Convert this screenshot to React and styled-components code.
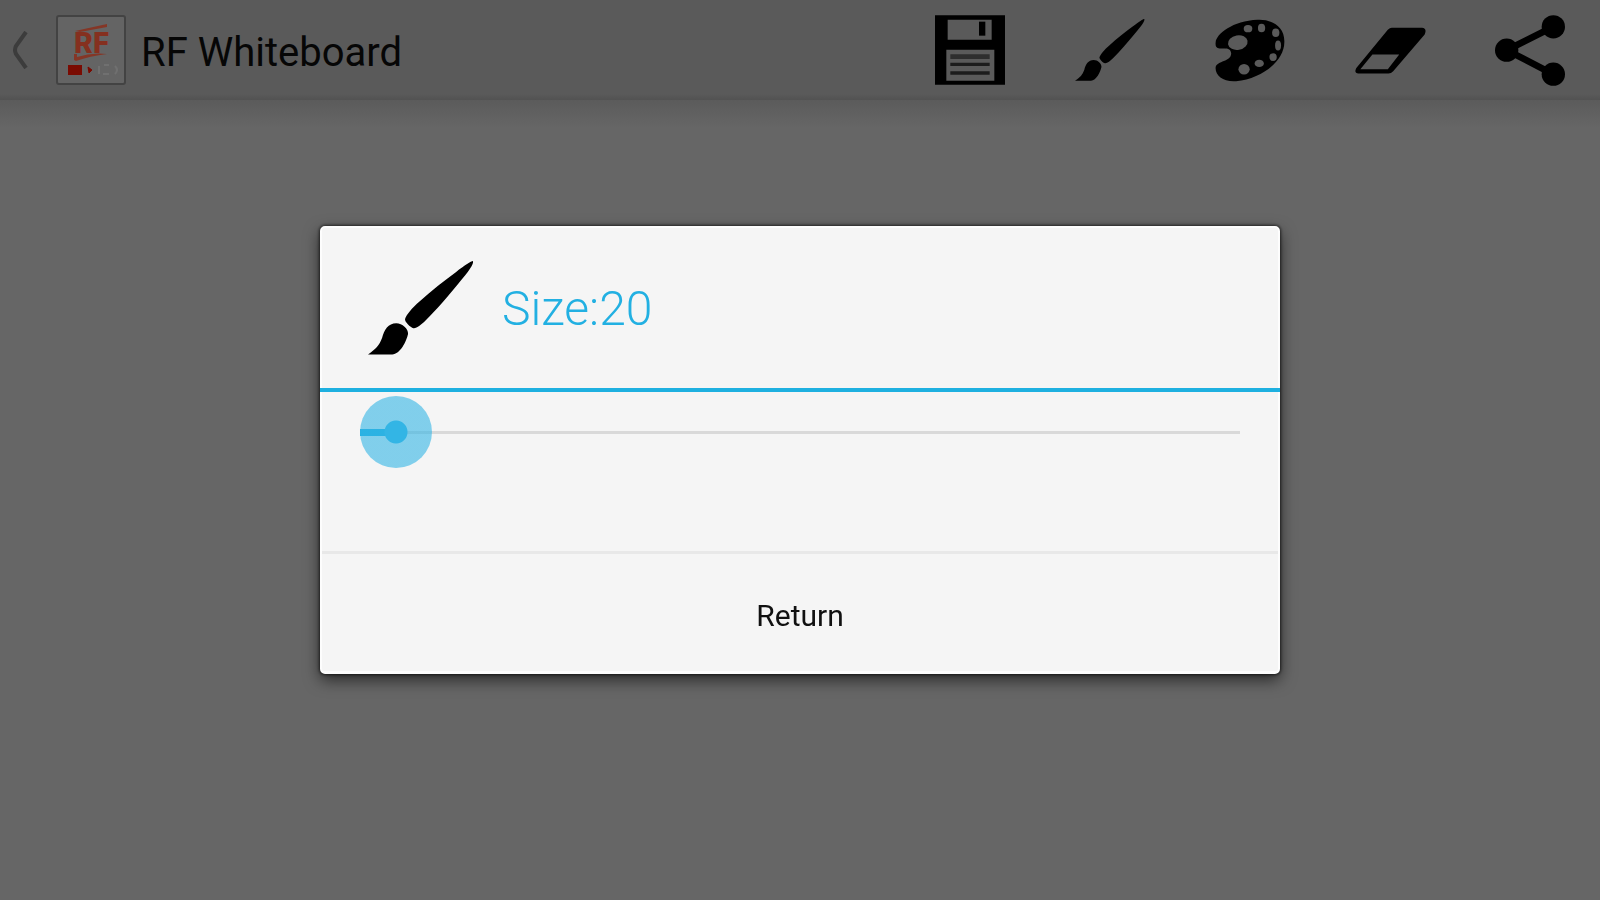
import React, { useState } from "react";
import styled, { createGlobalStyle } from "styled-components";

const GlobalStyle = createGlobalStyle`
  * { box-sizing: border-box; }
  body {
    margin: 0;
    background: #666666;
    font-family: Roboto, "Liberation Sans", sans-serif;
  }
  svg { display: block; }
`;

const Screen = styled.div`
  min-height: 100vh;
  display: flex;
  flex-direction: column;
`;

const ActionBar = styled.header`
  display: flex;
  align-items: center;
  justify-content: space-between;
  height: 100px;
  background: linear-gradient(#5a5a5a 94%, #525252);
`;

const BarShadow = styled.div`
  height: 28px;
  background: linear-gradient(#5b5b5b, #666666);
`;

const UpLink = styled.a`
  display: flex;
  align-items: center;
  padding-left: 12px;
  color: #060606;
  text-decoration: none;
`;

const AppIcon = styled.span`
  margin: 0 15px 0 28px;
`;

const AppTitle = styled.h1`
  margin: 0;
  padding-top: 6px;
  font-size: 40px;
  line-height: 48px;
  font-weight: 400;
`;

const Actions = styled.nav`
  display: flex;
  height: 100%;
`;

const ActionButton = styled.button`
  display: flex;
  align-items: center;
  justify-content: center;
  width: 140px;
  padding: 0;
  border: 0;
  background: none;
  color: #000;
`;

const Overlay = styled.div`
  position: fixed;
  inset: 0;
  display: flex;
  align-items: center;
  justify-content: center;
`;

const Dialog = styled.section`
  width: 60%;
  display: flex;
  flex-direction: column;
  border: 2px solid #fdfdfd;
  border-bottom-width: 3px;
  border-radius: 5px;
  background: #f5f5f5;
  box-shadow: 0 0 3px 1px rgba(0, 0, 0, 0.6), 0 6px 16px rgba(0, 0, 0, 0.6);
`;

const DialogHeader = styled.div`
  display: flex;
  align-items: center;
  gap: 28px;
  height: 164px;
  margin: 0 -2px;
  padding: 0 48px;
  border-bottom: 4px solid #1eb0e0;
`;

const SizeLabel = styled.label`
  padding-top: 2px;
  color: #22b0e2;
  font-size: 48px;
  line-height: 56px;
  font-weight: 300;
`;

const DialogBody = styled.div`
  height: 162px;
  padding: 4px 38px 0;
  border-bottom: 3px solid #e8e8e8;
`;

const SizeSlider = styled.input`
  appearance: none;
  display: block;
  width: 100%;
  height: 72px;
  margin: 0;
  background:
    linear-gradient(#20aee0, #20aee0) left center / calc(36px + (100% - 72px) * ${(p) => p.$ratio}) 7px no-repeat,
    linear-gradient(#d9d9d9, #d9d9d9) center / 100% 3px no-repeat;

  &::-webkit-slider-thumb {
    appearance: none;
    width: 72px;
    height: 72px;
    border-radius: 50%;
    background: radial-gradient(circle, #33b5e5 11px, rgba(51, 181, 229, 0.6) 12px);
  }
`;

const ReturnButton = styled.button`
  height: 117px;
  padding: 6px 0 0;
  border: 0;
  background: none;
  color: #111;
  font-family: inherit;
  font-size: 30px;
  line-height: 36px;
`;

const Chevron = () => (
  <svg width="16" height="38" viewBox="0 0 16 38" fill="none" stroke="#3c3c3c" strokeWidth="4">
    <path d="M14 1 L4 15 Q2 19 4 23 L14 37" />
  </svg>
);

const Logo = () => (
  <svg width="70" height="70" viewBox="0 0 70 70">
    <rect x="1" y="1" width="68" height="68" rx="2" fill="#646464" stroke="#434343" strokeWidth="2" />
    <path d="M19 16 L51 9 V12 L24 17 Z M18 45 V39 H21 V42 Q36 37 51 39 Q34 41 20 46 Z" fill="#853626" />
    <text x="18" y="38" fontFamily="Roboto" fontWeight="900" fontSize="29" fill="#85301f">RF</text>
    <rect x="12" y="50" width="14" height="10" fill="#7a0b02" />
    <path d="M32 52 L36 55 L33 58 Z" fill="#7a0b02" stroke="#7a0b02" />
    <path d="M43 51 V59 M48 50 H53 M47 59 H53 M59 51 Q63 55 59 59" stroke="#707070" strokeWidth="2" fill="none" />
  </svg>
);

const SaveIcon = () => (
  <svg width="70" height="70" viewBox="46 47 210 208">
    <path fillRule="evenodd" d="M46 47H256V255H46Z M84 60V120H216V60Z M80 150V243H224V150Z" />
    <path d="M178 66H197V108H178Z" />
    <path d="M92 171H210" stroke="#2e2e2e" strokeWidth="14" />
    <path d="M92 194H210M92 220H210" stroke="#1c1c1c" strokeWidth="10" />
  </svg>
);

const BrushIcon = ({ width, height }) => (
  <svg width={width} height={height} viewBox="0 0 105 93">
    <path d="M104 0C105 3 100 10 89 23C80 34 68 48 57 59C53 63 48 67 45 66.500C42 66 36 60 36.700 57.500C38 53 44 46 51 40C63 29 76 19 87 11C96 4 102 0 104 0Z" />
    <path d="M28 61.500C34 61.500 40 67 39.700 72C38 80 32 92 24 92.500H0C8 87 11 84 14 76C16 68 20 61.500 28 61.500Z" />
  </svg>
);

const PaletteIcon = () => (
  <svg width="70" height="63" viewBox="46 55 212 190">
    <path d="M48 125C50 100 100 60 175 57C215 55 258 75 256 125C256 180 190 235 110 243C70 246 45 225 48 200C52 180 95 185 95 158C92 140 75 145 60 144C48 142 47 135 48 125Z" />
    <g fill="#5a5a5a">
      <ellipse cx="115" cy="126" rx="30" ry="22" transform="rotate(-10 115 126)" />
      <ellipse cx="146" cy="84" rx="13" ry="11" />
      <ellipse cx="187" cy="82" rx="11" ry="13" />
      <ellipse cx="230" cy="96" rx="11" ry="13" />
      <ellipse cx="237" cy="135" rx="9" ry="15" />
      <ellipse cx="222" cy="170" rx="11" ry="12" />
      <ellipse cx="180" cy="189" rx="14" ry="11" />
      <ellipse cx="134" cy="207" rx="17" ry="16" />
    </g>
  </svg>
);

const EraserIcon = () => (
  <svg width="71" height="47" viewBox="468 80 212 140">
    <path fillRule="evenodd" d="M578 82H668Q684 84 676 102L582 212Q576 219 568 219H478Q464 217 472 202L566 88Q572 82 578 82Z M520 162L484 206H566L600 162Z" />
  </svg>
);

const ShareIcon = () => (
  <svg width="70" height="71" viewBox="167 45 210 212">
    <path d="M342 80L202 150L342 222" fill="none" stroke="#000" strokeWidth="20" />
    <circle cx="202" cy="150" r="35" />
    <circle cx="342" cy="80" r="35" />
    <circle cx="342" cy="222" r="35" />
  </svg>
);

const MIN = 20;
const MAX = 100;

export default function App() {
  const [size, setSize] = useState(20);
  const [open, setOpen] = useState(true);

  return (
    <>
      <GlobalStyle />
      <Screen>
        <ActionBar>
          <UpLink href="#">
            <Chevron />
            <AppIcon><Logo /></AppIcon>
            <AppTitle>RF Whiteboard</AppTitle>
          </UpLink>
          <Actions>
            <ActionButton aria-label="Save"><SaveIcon /></ActionButton>
            <ActionButton aria-label="Brush size" onClick={() => setOpen(true)}>
              <BrushIcon width="70" height="62" />
            </ActionButton>
            <ActionButton aria-label="Colour"><PaletteIcon /></ActionButton>
            <ActionButton aria-label="Eraser"><EraserIcon /></ActionButton>
            <ActionButton aria-label="Share"><ShareIcon /></ActionButton>
          </Actions>
        </ActionBar>
        <BarShadow />
      </Screen>
      {open && (
        <Overlay>
          <Dialog role="dialog" aria-labelledby="size-label">
            <DialogHeader>
              <BrushIcon width="106" height="94" />
              <SizeLabel id="size-label" htmlFor="size">Size:{size}</SizeLabel>
            </DialogHeader>
            <DialogBody>
              <SizeSlider
                id="size"
                type="range"
                min={MIN}
                max={MAX}
                value={size}
                $ratio={(size - MIN) / (MAX - MIN)}
                onChange={(e) => setSize(Number(e.target.value))}
              />
            </DialogBody>
            <ReturnButton onClick={() => setOpen(false)}>Return</ReturnButton>
          </Dialog>
        </Overlay>
      )}
    </>
  );
}
